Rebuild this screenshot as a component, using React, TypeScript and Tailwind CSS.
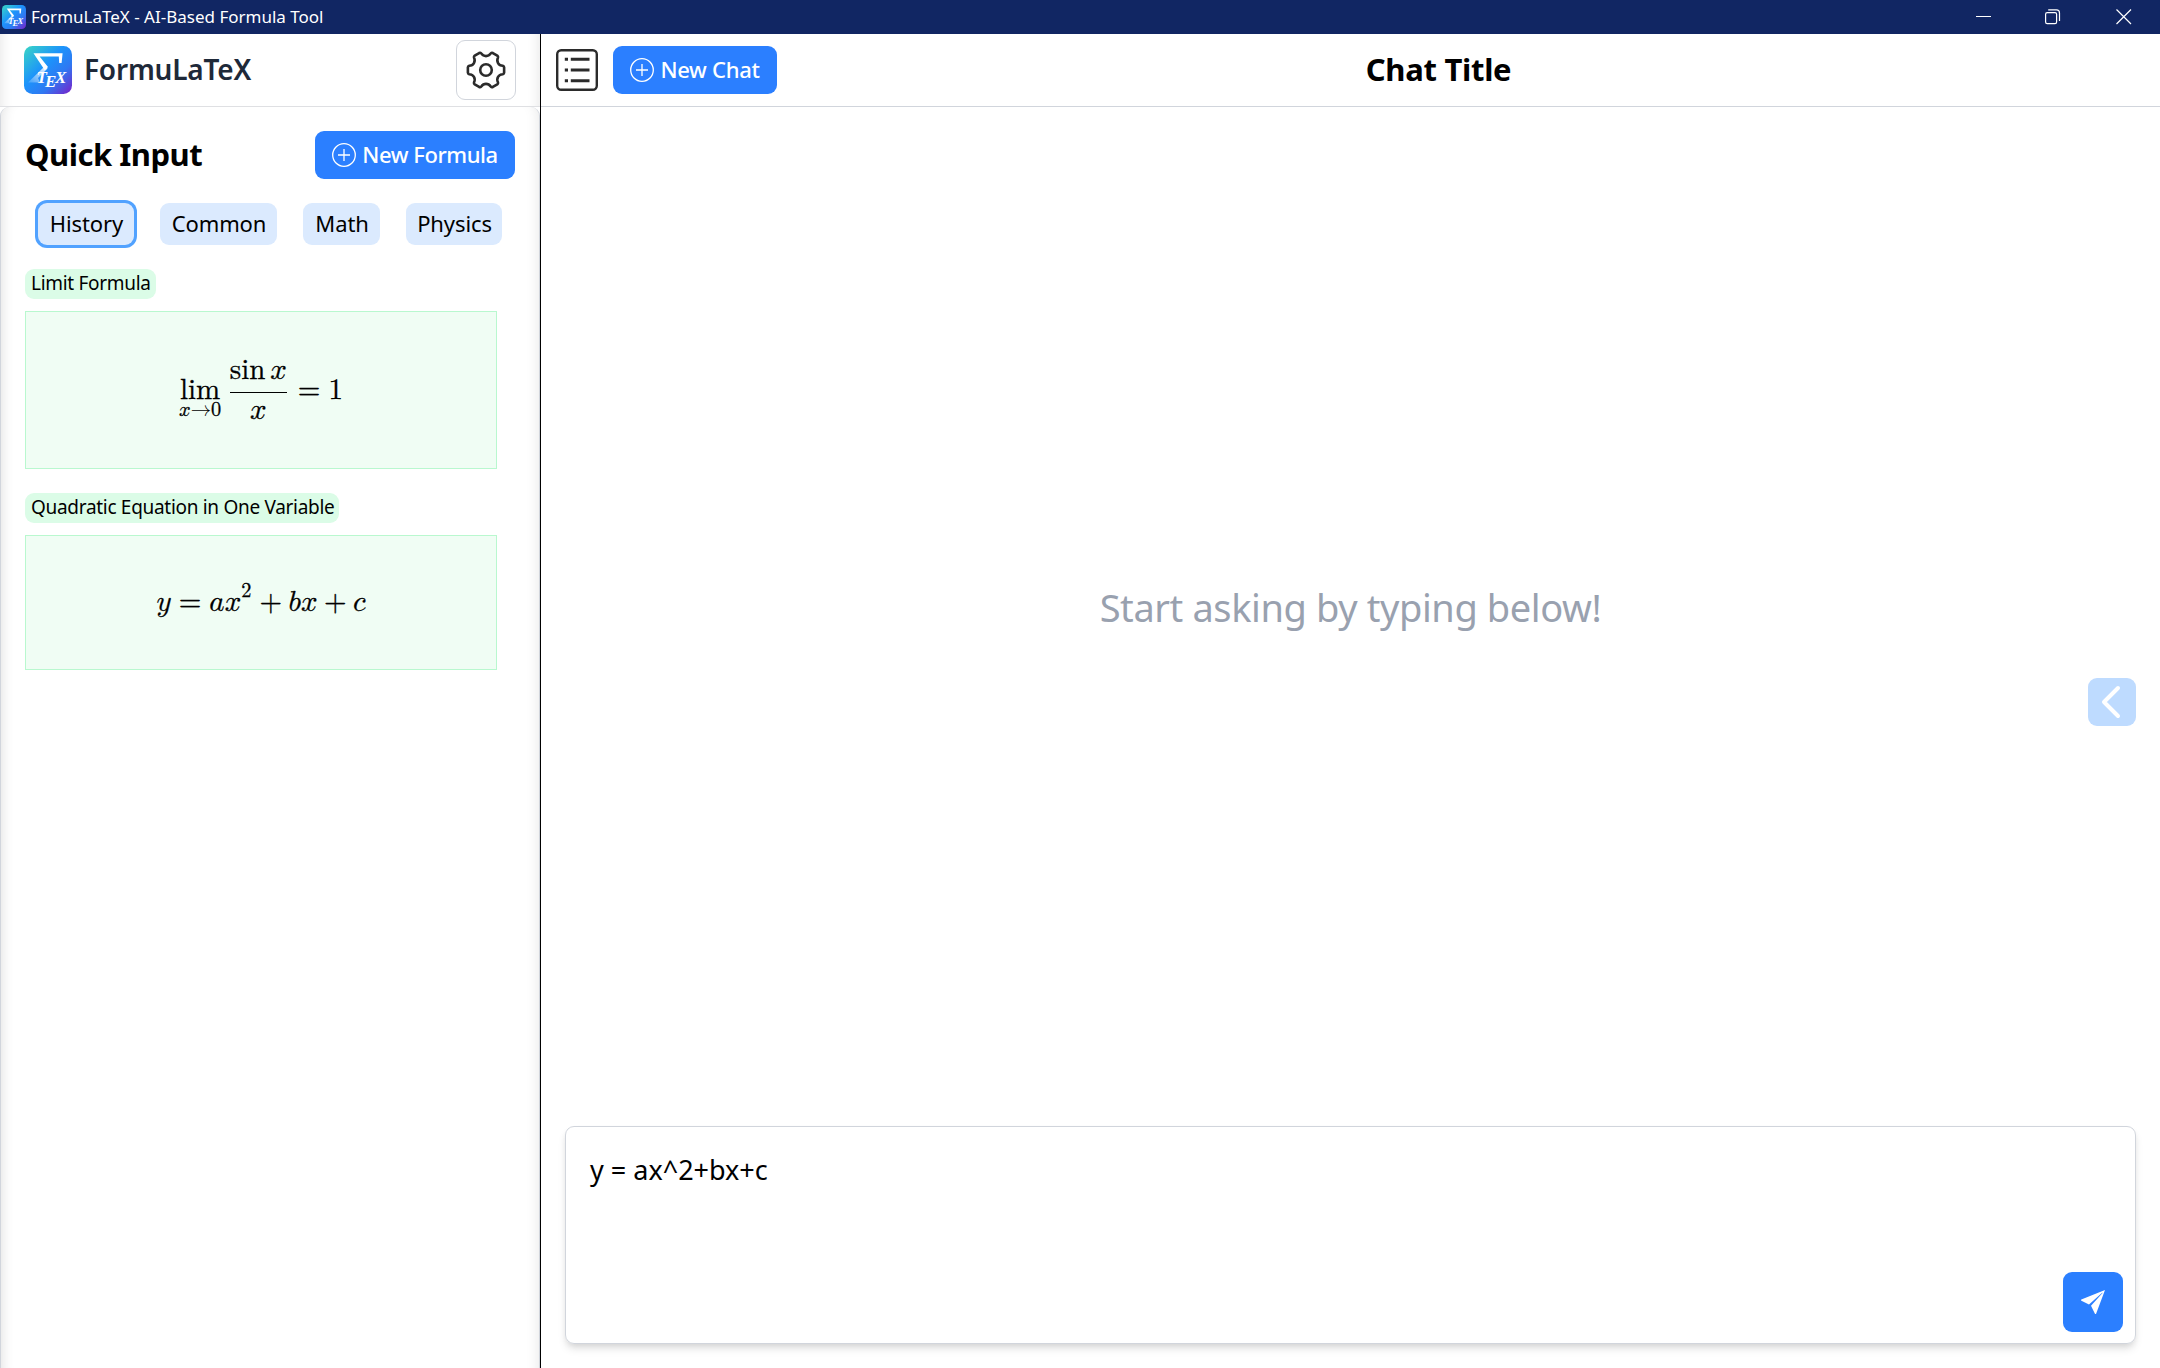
import React, { useId } from "react";

const sans = "[font-family:'Noto_Sans','Open_Sans',sans-serif]";

function Logo({ className }: { className: string }) {
  const id = useId();
  return (
    <svg viewBox="0 0 48 48" className={className} aria-hidden="true">
      <defs>
        <linearGradient id={id + "bg"} x1="0" y1="0" x2="1" y2="1">
          <stop offset="0" stopColor="#3ad6c4" />
          <stop offset="0.42" stopColor="#1c93fb" />
          <stop offset="0.68" stopColor="#2f78f2" />
          <stop offset="1" stopColor="#7a1fc8" />
        </linearGradient>
        <linearGradient id={id + "leg"} x1="24" y1="18" x2="6" y2="38" gradientUnits="userSpaceOnUse">
          <stop offset="0" stopColor="#fff" />
          <stop offset="0.35" stopColor="#fff" stopOpacity="0.7" />
          <stop offset="1" stopColor="#fff" stopOpacity="0.15" />
        </linearGradient>
      </defs>
      <rect width="48" height="48" rx="8.5" fill={`url(#${id}bg)`} />
      <path d="M21.5 19.5 L4 36.5 H16 L14 32 L23.5 22.5 Z" fill={`url(#${id}leg)`} />
      <path d="M9.5 7.2 H38.6 L37.6 17 H35.2 L34.8 10.4 H15.6 L24 21 L20.8 24.2 Z" fill="#fff" />
      <g fill="#fff" fontFamily="'Liberation Serif',serif" fontStyle="italic" fontWeight="700" fontSize="17">
        <text x="12.4" y="37.4">T</text>
        <text x="21" y="41.4">E</text>
        <text x="31" y="37.4">X</text>
      </g>
    </svg>
  );
}

function gearPath() {
  const pt = (deg: number, r: number) => {
    const a = (deg * Math.PI) / 180;
    return `${(20 + r * Math.cos(a)).toFixed(2)} ${(20 + r * Math.sin(a)).toFixed(2)}`;
  };
  let d = `M${pt(-14, 17.3)}`;
  for (let t = 0; t < 360; t += 60) {
    d += ` Q${pt(t - 12, 18.4)} ${pt(t - 8, 18.3)} L${pt(t + 8, 18.3)} Q${pt(t + 12, 18.4)} ${pt(t + 14, 17.3)} C${pt(t + 20, 13.2)} ${pt(t + 40, 13.2)} ${pt(t + 46, 17.3)}`;
  }
  return d + "Z";
}

function Gear() {
  return (
    <svg viewBox="0 0 40 40" className="size-10" fill="none" stroke="#2b2b2b" strokeWidth="2.6" strokeLinejoin="round">
      <path d={gearPath()} />
      <circle cx="20" cy="20" r="5.8" />
    </svg>
  );
}

function PlusCircle() {
  return (
    <svg viewBox="0 0 24 24" className="size-6 shrink-0" fill="none" stroke="#fff" strokeWidth="1.3">
      <circle cx="12" cy="12" r="11.3" />
      <path d="M12 6v12M6 12h12" />
    </svg>
  );
}

function TitleBar() {
  return (
    <header className="flex h-[34px] shrink-0 items-center bg-[#112663] pl-0.5 text-white">
      <Logo className="size-6" />
      <span className="-mt-px ml-[5px] text-[17px] leading-none">FormuLaTeX - AI-Based Formula Tool</span>
      <div className="mr-7 ml-auto flex items-center">
        <svg viewBox="0 0 16 16" className="mr-[53px] size-4" stroke="#fff" fill="none">
          <path d="M0 7.5h15" />
        </svg>
        <svg viewBox="0 0 16 16" className="mr-[55px] size-4" stroke="#fff" fill="none" strokeWidth="1.2">
          <rect x="0.6" y="3.6" width="11" height="11" rx="1.6" />
          <path d="M3.2 0.9h8.3a3 3 0 0 1 3 3v8.2" />
        </svg>
        <svg viewBox="0 0 16 16" className="size-4" stroke="#fff" fill="none" strokeWidth="1.2">
          <path d="M0.5 0.5l14.5 14.5M15 0.5L0.5 15" />
        </svg>
      </div>
    </header>
  );
}

function FormulaCard({ title, height, children }: { title: string; height: string; children: React.ReactNode }) {
  return (
    <section className="mb-6">
      <h3 className="inline-flex h-[30px] items-center rounded-[9px] bg-green-100 pr-[5px] pb-0.5 pl-1.5 text-[19px] leading-none tracking-[-0.3px]">
        {title}
      </h3>
      <div className={`mt-3 flex w-[472px] items-center justify-center border border-[#b9f8cf] bg-[#f0fdf4] pb-0.5 ${height}`}>
        {children}
      </div>
    </section>
  );
}

const mathFont = "[font-family:'Latin_Modern_Math','Liberation_Serif',serif] text-[29px] [-webkit-text-stroke:0.3px_black]";

const tabs = [
  { name: "History", size: "w-24", active: true },
  { name: "Common", size: "w-[117px]" },
  { name: "Math", size: "w-[77px]" },
  { name: "Physics", size: "w-24" },
];

function Sidebar() {
  return (
    <aside className="flex w-[540px] shrink-0 flex-col">
      <div className="flex h-[73px] items-center border-b border-[#dfe0e3] pr-6 pl-6 shadow-[inset_14px_0_14px_-14px_rgba(0,0,0,0.12),inset_-14px_0_14px_-14px_rgba(0,0,0,0.12)]">
        <Logo className="size-12" />
        <h1 className="-mt-0.5 ml-3 text-[28px] leading-none font-semibold tracking-[-0.2px] text-gray-800">FormuLaTeX</h1>
        <button className="ml-auto flex size-[60px] items-center justify-center rounded-[9px] border border-gray-300 bg-white">
          <Gear />
        </button>
      </div>
      <div className="flex-1 rounded-t-[9px] border-x border-gray-300 pr-6 pl-6 shadow-[inset_14px_0_14px_-14px_rgba(0,0,0,0.14),inset_-14px_0_14px_-14px_rgba(0,0,0,0.1)]">
        <div className="flex items-center pt-6">
          <h2 className="-mt-0.5 text-[31px] leading-none font-bold tracking-[-0.5px]">Quick Input</h2>
          <button className="ml-auto flex h-12 w-[200px] items-center justify-center gap-1.5 rounded-[9px] bg-[#2b7fff] text-[22px] leading-none font-medium tracking-[-0.45px] text-white">
            <PlusCircle />
            <span className="-mt-0.5">New Formula</span>
          </button>
        </div>
        <nav className="mt-6 flex gap-[26px] pl-[13px]">
          {tabs.map((t) => (
            <button
              key={t.name}
              className={`flex h-[42px] items-center justify-center rounded-[9px] bg-blue-100 pb-0.5 pl-px text-[22px] leading-none tracking-[-0.1px] ${t.size} ${t.active ? "ring-[3px] ring-[#51a2ff]" : ""}`}
            >
              {t.name}
            </button>
          ))}
        </nav>
        <div className="mt-6">
          <FormulaCard title="Limit Formula" height="h-[158px]">
            <math display="block" className={mathFont}>
              <munder>
                <mo movablelimits="false" lspace="0" rspace="0.3em">lim</mo>
                <mrow><mi>x</mi><mo lspace="0" rspace="0">→</mo><mn>0</mn></mrow>
              </munder>
              <mfrac>
                <mrow><mi>sin</mi><mspace width="0.1667em" /><mi>x</mi></mrow>
                <mi>x</mi>
              </mfrac>
              <mspace width="0.1em" />
              <mo>=</mo>
              <mn>1</mn>
            </math>
          </FormulaCard>
          <FormulaCard title="Quadratic Equation in One Variable" height="h-[135px]">
            <math display="block" className={mathFont}>
              <mi>y</mi><mo>=</mo><mi>a</mi>
              <msup><mi>x</mi><mn className="-translate-y-[3px]">2</mn></msup>
              <mo>+</mo><mi>b</mi><mi>x</mi><mo>+</mo><mi>c</mi>
            </math>
          </FormulaCard>
        </div>
      </div>
    </aside>
  );
}

function Chat() {
  return (
    <main className="relative flex flex-1 flex-col border-l border-black">
      <div className="flex h-[73px] shrink-0 items-center border-b border-gray-300 pl-[15px]">
        <svg viewBox="0 0 42 42" className="size-[42px]" fill="none" stroke="#2b2b2b" strokeWidth="2.4">
          <rect x="1.2" y="1.2" width="39.6" height="39.6" rx="4" />
          <path d="M8.8 10.3h3.2M8.8 21h3.2M8.8 31.7h3.2M14.8 10.3H33.5M14.8 21H33.5M14.8 31.7H33.5" strokeWidth="3" />
        </svg>
        <button className="ml-[15px] flex h-12 w-[164px] items-center justify-center gap-1.5 rounded-[9px] bg-[#2b7fff] text-[22px] leading-none font-medium tracking-[-0.3px] text-white">
          <PlusCircle />
          <span className="-mt-0.5">New Chat</span>
        </button>
        <h2 className="-mt-0.5 flex-1 pr-[60px] text-center text-[31px] leading-none font-bold tracking-[-0.28px]">Chat Title</h2>
      </div>
      <div className="flex flex-1 items-center justify-center">
        <p className="mt-[-20px] text-[38px] leading-none tracking-[-0.4px] text-[#99a1af]">Start asking by typing below!</p>
      </div>
      <div className="mr-6 mb-6 ml-6 flex h-[218px] rounded-[9px] border border-gray-300 p-[11px] pr-3 shadow-[0_6px_9px_-1px_rgba(0,0,0,0.1),0_3px_6px_-2px_rgba(0,0,0,0.1)]">
        <p className="flex-1 pt-[18px] pl-[13px] text-[27px] leading-none">y = ax^2+bx+c</p>
        <button className="flex size-[60px] items-center justify-center self-end rounded-[9px] bg-[#2b7fff]">
          <svg viewBox="0 0 24 24" className="size-6" fill="#fff">
            <path d="M24 0 L0.3 9.6 Q-0.3 10.2 0.4 10.8 L8 14.6 L20.6 3.2 L22 2.4 L10 15.8 L13.8 23.6 Q14.6 24.6 15.2 23.4 Z" />
          </svg>
        </button>
      </div>
      <button className="absolute top-[644px] right-6 flex size-12 items-center justify-center rounded-[9px] bg-[#bedbff]">
        <svg viewBox="0 0 48 48" className="size-12" fill="none" stroke="#fff" strokeWidth="4" strokeLinecap="round" strokeLinejoin="round">
          <path d="M30 10L16 24L30 38" />
        </svg>
      </button>
    </main>
  );
}

export default function App() {
  return (
    <div className={`flex h-screen flex-col overflow-hidden bg-white text-black ${sans}`}>
      <TitleBar />
      <div className="flex min-h-0 flex-1">
        <Sidebar />
        <Chat />
      </div>
    </div>
  );
}
